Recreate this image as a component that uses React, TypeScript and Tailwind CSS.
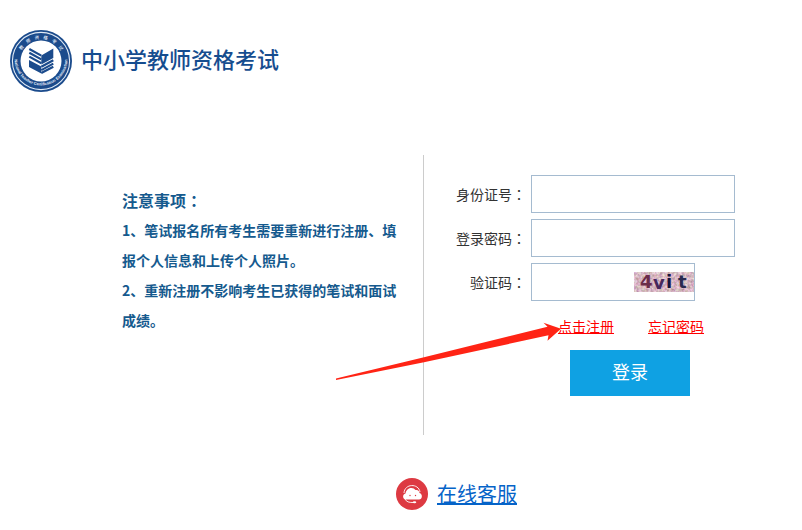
import type { ReactNode } from "react";

/* ─── Data ────────────────────────────────────────────────────────── */

const NOTICES = [
  "1、笔试报名所有考生需要重新进行注册、填报个人信息和上传个人照片。",
  "2、重新注册不影响考生已获得的笔试和面试成绩。",
];

const CAPTCHA = [
  { char: "4", x: 6, y: 16, fill: "#6b2c4a" },
  { char: "v", x: 19, y: 17, fill: "#46285c" },
  { char: "i", x: 32, y: 16, fill: "#17163f" },
  { char: "t", x: 44, y: 16, fill: "#2a2b50" },
];

/* ─── Drawings ────────────────────────────────────────────────────── */

function Emblem() {
  return (
    <svg viewBox="0 0 62 62" className="size-[62px] shrink-0" aria-hidden="true">
      <defs>
        <path id="emblem-top" d="M9,31 A22,22 0 0 1 53,31" />
        <path id="emblem-bottom" d="M4.5,29 A26.5,26.5 0 1 0 57.5,29" />
      </defs>
      <circle cx="31" cy="31" r="31" fill="#1b4b8c" />
      <circle cx="31" cy="31" r="28.6" fill="none" stroke="#dfe9f5" strokeWidth="1.1" />
      <circle cx="31" cy="31" r="20.5" fill="#fff" />
      <g fill="#e6eefa" fontFamily="'Noto Sans CJK SC', sans-serif">
        <text fontSize="4.5" fontWeight="500" textAnchor="middle" letterSpacing="4">
          <textPath href="#emblem-top" startOffset="53%">教师资格考试</textPath>
        </text>
        <text fontSize="4" fontWeight="700" textAnchor="middle" fontFamily="'Liberation Sans', sans-serif">
          <textPath href="#emblem-bottom" startOffset="50%">National Teacher Certification Examination</textPath>
        </text>
      </g>
      {/* Open book: striped pages over solid ones */}
      <path
        d="M43.3,18.5 L31.3,25.5 V34.5 L43.3,28 Z M19,30 L31.3,36.5 V43.5 L19,37 Z"
        fill="#1b4b8c"
      />
      <path
        d="M19.3,19 L31.3,25.6 M19.3,22.8 L31.3,29.4 M19.3,26.6 L31.3,33.2 M43.3,30.3 L31.3,36.8 M43.3,33.6 L31.3,40.1 M43.3,36.8 L31.3,43"
        stroke="#1b4b8c"
        strokeWidth="2.2"
      />
    </svg>
  );
}

function Captcha() {
  return (
    <svg viewBox="0 0 60 20" className="h-5 w-[60px] shrink-0" role="img" aria-label="验证码图片">
      <filter id="grain" x="0" y="0" width="100%" height="100%" colorInterpolationFilters="sRGB">
        <feTurbulence type="fractalNoise" baseFrequency="0.35" numOctaves="3" seed="7" />
        <feColorMatrix values="0.4 0 0 0 0.64  0.4 0.3 0 0 0.37  0.4 0 0.2 0 0.46  0 0 0 0 1" />
      </filter>
      <rect width="60" height="20" fill="#d8bfc9" />
      <rect width="60" height="20" filter="url(#grain)" />
      <g fontFamily="'DejaVu Sans', sans-serif" fontSize="18" fontWeight="700">
        {CAPTCHA.map((c) => (
          <text key={c.char} x={c.x} y={c.y} fill={c.fill}>{c.char}</text>
        ))}
      </g>
    </svg>
  );
}

function ServiceIcon() {
  return (
    <svg viewBox="0 0 32 32" className="size-8 shrink-0" aria-hidden="true">
      <circle cx="16" cy="16" r="16" fill="#dd3a42" />
      <path d="M8,15 C8.5,5.5 22.5,5 24,14" fill="none" stroke="#fff" strokeWidth="0.9" />
      <path
        d="M10,21.5 C6.5,21.5 6,16.5 9.5,15.5 C10.5,9.5 17,8.5 19.5,12 C22,11.5 23.5,13 23.5,15 C27,16 26.5,21.5 23,21.5 Z"
        fill="#fff"
      />
      <path d="M9,21 C10.5,24 13,24.5 17,24.5" fill="none" stroke="#fff" strokeWidth="0.9" />
      <ellipse cx="18.5" cy="24.3" rx="1.8" ry="1" fill="#fff" />
      <circle cx="14" cy="17.5" r="0.7" fill="#dd3a42" />
      <circle cx="19.5" cy="17.5" r="0.7" fill="#dd3a42" />
    </svg>
  );
}

/* ─── Form pieces ─────────────────────────────────────────────────── */

function Colon() {
  return <span className="font-['Noto_Sans_CJK_TC',sans-serif]">：</span>;
}

function Field({ id, label, children }: { id: string; label: string; children: ReactNode }) {
  return (
    <div className="flex items-center gap-[5px]">
      <label htmlFor={id} className="w-[70px] shrink-0 text-right whitespace-nowrap text-[#333]">
        {label}
        <Colon />
      </label>
      {children}
    </div>
  );
}

/* ─── Page ────────────────────────────────────────────────────────── */

export default function App() {
  return (
    <div className="min-h-screen bg-white font-['Noto_Sans_CJK_SC',sans-serif] text-sm">
      <header className="flex items-start gap-[9px] px-[10px] pt-[30px] pb-[63px]">
        <Emblem />
        <h1 className="pt-3 text-[22px] leading-8 font-medium text-[#164d8f]">中小学教师资格考试</h1>
      </header>

      <main className="relative grid min-h-[280px] grid-cols-[424fr_378fr]">
        <section className="flex justify-end border-r border-[#ccc] pt-[30px] pr-[21px] text-[#155a8e]">
          <div className="w-[280px] font-bold">
            <h2 className="text-base leading-[30px]">
              注意事项
              <Colon />
            </h2>
            {NOTICES.map((notice) => (
              <p key={notice} className="leading-[30px]">{notice}</p>
            ))}
          </div>
        </section>

        <form className="flex flex-col gap-1.5 pt-5 pl-8" onSubmit={(e) => e.preventDefault()}>
          <Field id="id-number" label="身份证号">
            <input id="id-number" type="text" className="h-[38px] w-[204px] border border-[#a5bbd0] px-2 outline-none" />
          </Field>
          <Field id="password" label="登录密码">
            <input id="password" type="password" className="h-[38px] w-[204px] border border-[#a5bbd0] px-2 outline-none" />
          </Field>
          <Field id="captcha" label="验证码">
            <div className="flex h-[38px] w-[164px] items-center border border-[#a5bbd0]">
              <input id="captcha" type="text" className="h-full min-w-0 flex-1 px-2 outline-none" />
              <Captcha />
            </div>
          </Field>

          <div className="flex w-[279px] flex-col items-end">
            <div className="flex gap-[34px] pt-[7px] pr-[31px] leading-6 text-[#f00] underline">
              <a href="#register">点击注册</a>
              <a href="#forgot">忘记密码</a>
            </div>
            <button type="submit" className="mt-3 mr-[45px] h-[46px] w-[120px] bg-[#0fa1e3] pb-1 text-lg text-white">
              登录
            </button>
          </div>
        </form>

        {/* Pointer to the registration link */}
        <svg
          viewBox="0 0 226 60"
          className="pointer-events-none absolute top-[167px] left-[336px] h-[60px] w-[226px]"
          aria-hidden="true"
        >
          <path
            d="M0,56.5 L88,35.3 L211.5,4.7 L207.5,0.7 L225,6.7 L211.5,18.7 L212.5,13.3 L88,40.3 L0,58 Z"
            fill="#ff2415"
          />
        </svg>
      </main>

      <footer className="flex items-center justify-center gap-[9px] pt-[43px] pl-[111px]">
        <ServiceIcon />
        <a href="#service" className="text-xl leading-8 text-[#0563c8] underline">在线客服</a>
      </footer>
    </div>
  );
}
